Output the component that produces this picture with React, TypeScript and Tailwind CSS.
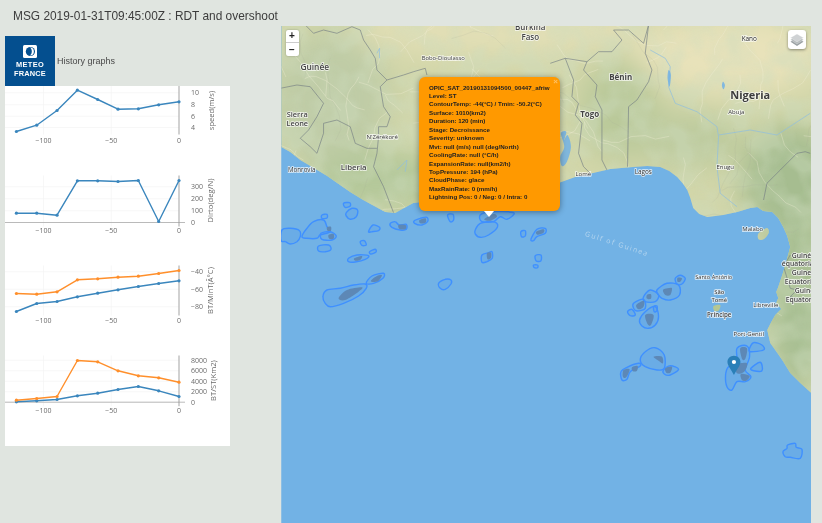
import React from "react";

type Pt = [number, number];
const z = (ox: number, oy: number, pts: number[]): Pt[] => {
  const r: Pt[] = [];
  for (let i = 0; i < pts.length; i += 2) r.push([pts[i] / 3 + ox, pts[i + 1] / 3 + oy]);
  return r;
};
const line = (p: Pt[]) => "M" + p.map((q) => q[0].toFixed(1) + " " + q[1].toFixed(1)).join("L");
const blob = (p: Pt[]) => {
  const n = p.length;
  const f = (v: number) => v.toFixed(1);
  let d = `M${f(p[0][0])} ${f(p[0][1])}`;
  for (let i = 0; i < n; i++) {
    const p0 = p[(i - 1 + n) % n];
    const p1 = p[i];
    const p2 = p[(i + 1) % n];
    const p3 = p[(i + 2) % n];
    const c1: Pt = [p1[0] + (p2[0] - p0[0]) / 6, p1[1] + (p2[1] - p0[1]) / 6];
    const c2: Pt = [p2[0] - (p3[0] - p1[0]) / 6, p2[1] - (p3[1] - p1[1]) / 6];
    d += `C${f(c1[0])} ${f(c1[1])} ${f(c2[0])} ${f(c2[1])} ${f(p2[0])} ${f(p2[1])}`;
  }
  return d + "Z";
};

const coast: Pt[] = [
  [281, 26], [811, 26], [811, 393], [800, 383], [790, 373], [782, 360], [775, 350], [770, 343], [767, 330], [771, 322], [775, 315], [781, 309], [776, 303], [778, 298], [776, 292], [778, 287], [783, 272], [787, 258], [790, 247], [787, 236], [783, 227], [778, 218], [772, 212], [763, 211], [757, 207], [750, 208], [737, 212], [723, 215], [707, 217], [699, 214], [693, 208], [690, 198], [687, 190], [683, 184], [677, 177], [669, 171], [660, 167], [647, 166], [633, 167], [610, 169], [593, 173], [575, 177], [550, 186], [480, 195], [413, 203], [402, 209], [395, 213], [385, 212], [374, 206], [363, 200], [350, 192], [337, 183], [327, 176], [317, 170], [300, 160], [290, 152], [281, 147],
];

const b3 = (a: number[]) => z(280, 20, a);
const b4 = (a: number[]) => z(550, 20, a);
const borders: Pt[][] = [
  b3([75, 15, 100, 40, 130, 30, 170, 40, 215, 20, 240, 30, 250, 60, 270, 90, 285, 115, 290, 150, 320, 180, 370, 165, 400, 155, 435, 145, 440, 165]),
  b3([320, 180, 300, 200, 310, 260, 330, 290, 320, 320, 295, 320, 295, 350, 290, 400, 280, 440, 310, 500, 340, 578]),
  b3([0, 205, 50, 195, 90, 200, 130, 250, 110, 290, 85, 330, 60, 355]),
  b3([60, 355, 90, 380, 110, 400, 130, 340, 130, 310, 170, 300, 210, 320, 225, 370, 260, 385, 290, 385]),
  b4([0, 130, 45, 115, 70, 180, 65, 230, 85, 250, 75, 285, 95, 310, 85, 400, 100, 440, 120, 460]),
  b4([100, 150, 140, 195, 135, 230, 155, 270, 155, 420, 170, 450]),
  b4([45, 115, 110, 125, 145, 95, 185, 95, 215, 60, 190, 30, 235, 30, 280, 70, 295, 15]),
  b4([100, 150, 110, 125]),
  b4([295, 15, 285, 100, 305, 150, 295, 185, 260, 240, 235, 260, 232, 440]),
  b4([780, 400, 765, 395, 740, 400, 690, 450, 650, 490, 640, 540]),
  z(590, 200, [600, 165, 580, 200, 600, 265, 620, 270, 600, 290, 640, 300, 662, 295]),
];
const rivers: Pt[][] = [
  b4([300, 90, 345, 115, 360, 140, 355, 200, 375, 250, 440, 275, 500, 320, 505, 350, 500, 440, 510, 520, 560, 560]),
  b4([505, 345, 600, 330, 680, 345, 780, 280]),
  b3([290, 100, 298, 85, 298, 115]),
  b3([350, 450, 380, 420, 375, 455]),
];
const lakes: Pt[][] = [
  b4([355, 150, 362, 165, 358, 200, 352, 175]),
  b4([518, 185, 524, 195, 520, 208, 515, 198]),
  b4([32, 340, 48, 335, 42, 360, 52, 345, 62, 380, 50, 425, 35, 438, 30, 410, 42, 380]),
];

const clouds5 = [
  [5, 120, 30, 115, 58, 122, 60, 140, 50, 155, 30, 162, 15, 155, 3, 152],
  [65, 140, 80, 115, 100, 95, 130, 90, 140, 110, 150, 125, 120, 135, 110, 145, 80, 145],
  [122, 130, 150, 125, 168, 138, 155, 150, 125, 148],
  [115, 168, 145, 165, 152, 178, 135, 185, 115, 183],
  [190, 40, 208, 38, 210, 48, 195, 52],
  [198, 68, 215, 55, 232, 60, 228, 80, 210, 88, 198, 78],
  [125, 75, 140, 73, 140, 84, 125, 85],
  [265, 125, 278, 105, 298, 112, 295, 122, 275, 125],
  [240, 155, 252, 152, 258, 165, 245, 166],
  [205, 205, 230, 195, 265, 197, 255, 208, 225, 216, 205, 215],
  [268, 185, 285, 178, 287, 186, 272, 192],
  [128, 320, 140, 300, 180, 295, 220, 285, 255, 282, 258, 295, 235, 318, 190, 340, 150, 350, 135, 340],
  [258, 280, 275, 258, 310, 250, 308, 265, 280, 280],
  [330, 100, 345, 95, 357, 105, 378, 103, 378, 118, 360, 120, 335, 112],
  [402, 92, 420, 85, 440, 82, 442, 95, 425, 105, 403, 100],
  [502, 75, 518, 73, 520, 90, 510, 95],
  [585, 120, 600, 100, 640, 95, 652, 110, 625, 135, 600, 142, 585, 132],
  [600, 75, 630, 65, 700, 68, 680, 88, 660, 80, 640, 95, 605, 95],
  [722, 125, 735, 122, 735, 138, 724, 140],
  [752, 148, 770, 118, 795, 115, 795, 130, 770, 140, 760, 152],
  [605, 195, 625, 188, 635, 185, 636, 205, 620, 215, 605, 217],
  [765, 197, 782, 195, 782, 212, 768, 213],
  [760, 225, 772, 225, 772, 233, 762, 233],
  [475, 280, 495, 268, 512, 270, 512, 282, 495, 298, 480, 295],
];
const dark5 = [
  [175, 325, 200, 300, 245, 292, 235, 305, 195, 330],
  [272, 272, 290, 258, 305, 256, 295, 272, 280, 276],
  [222, 205, 245, 198, 240, 210, 225, 212],
  [612, 88, 640, 72, 650, 80, 630, 92],
  [768, 125, 790, 118, 790, 128, 772, 134],
  [140, 112, 152, 110, 152, 122, 142, 122],
  [145, 135, 160, 132, 160, 146, 147, 146],
  [355, 105, 376, 105, 376, 117, 358, 117],
  [418, 90, 436, 85, 436, 98, 420, 100],
  [620, 190, 632, 188, 632, 204, 622, 208],
];
const clouds6 = [
  [255, 235, 270, 226, 285, 235, 275, 252, 260, 252],
  [200, 270, 230, 250, 265, 255, 268, 285, 240, 300, 215, 295, 205, 285],
  [160, 290, 180, 270, 205, 285, 195, 305, 165, 305],
  [130, 310, 160, 298, 165, 325, 140, 333, 130, 325],
  [112, 335, 125, 328, 135, 345, 120, 347],
  [148, 360, 165, 335, 195, 320, 205, 350, 195, 375, 175, 385, 155, 378],
  [190, 320, 200, 318, 200, 332, 192, 335],
  [150, 480, 165, 455, 195, 443, 222, 465, 222, 505, 200, 510, 165, 500],
  [92, 515, 110, 502, 145, 490, 150, 498, 120, 515, 110, 538, 95, 540],
  [220, 510, 240, 497, 265, 508, 240, 525, 222, 522],
  [406, 525, 415, 500, 440, 490, 440, 445, 470, 438, 478, 470, 465, 510, 482, 530, 465, 545, 440, 545, 425, 570, 410, 560],
  [478, 445, 490, 428, 515, 435, 520, 450, 480, 455],
  [482, 505, 510, 487, 515, 512, 490, 512],
  [578, 755, 590, 745, 592, 735, 615, 730, 618, 742, 635, 748, 630, 775, 600, 772, 585, 770],
];
const dark6 = [
  [262, 233, 275, 235, 270, 245, 262, 245],
  [218, 270, 232, 265, 245, 265, 240, 285, 225, 285],
  [170, 285, 182, 283, 182, 296, 170, 296],
  [138, 315, 160, 302, 160, 320, 145, 328],
  [165, 345, 190, 345, 182, 375, 172, 372],
  [190, 470, 215, 470, 218, 490, 205, 482],
  [225, 505, 245, 500, 240, 518, 228, 518],
  [100, 510, 118, 508, 108, 532, 98, 530],
  [125, 502, 142, 498, 140, 512, 128, 514],
  [450, 445, 470, 445, 466, 475, 456, 478],
  [440, 495, 470, 490, 462, 515, 440, 520],
  [452, 522, 478, 528, 468, 542, 455, 540],
];

const rng = (() => {
  let s = 12345;
  return () => {
    s = (s * 16807) % 2147483647;
    return s / 2147483647;
  };
})();
const roads: string[] = [];
for (let i = 0; i < 150; i++) {
  let x = 281 + rng() * 530;
  let y = 26 + rng() * 370;
  let a = rng() * 6.28;
  const pts: Pt[] = [[x, y]];
  const n = 3 + Math.floor(rng() * 6);
  for (let j = 0; j < n; j++) {
    a += (rng() - 0.5) * 1.2;
    const l = 5 + rng() * 10;
    x += Math.cos(a) * l;
    y += Math.sin(a) * l;
    pts.push([x, y]);
  }
  roads.push(line(pts));
}

type L = { t: string; x: number; y: number; s?: number; w?: number; a?: "start" | "middle"; c?: string };
const labels: L[] = [
  { t: "Guinée", x: 314.5, y: 70, s: 8.4, w: 600, c: "#444" },
  { t: "Sierra", x: 297, y: 117, s: 7.4, w: 600, c: "#444" },
  { t: "Leone", x: 297, y: 125.5, s: 7.4, w: 600, c: "#444" },
  { t: "N'Zérékoré", x: 382, y: 139, s: 6.1, c: "#333" },
  { t: "Liberia", x: 353.5, y: 169.5, s: 7.8, w: 600, c: "#444" },
  { t: "Monrovia", x: 301.5, y: 171.5, s: 6.2, c: "#333" },
  { t: "Bobo-Dioulasso", x: 443, y: 60, s: 5.9, c: "#333" },
  { t: "Burkina", x: 530, y: 30, s: 8, w: 600, c: "#444" },
  { t: "Faso", x: 530, y: 40, s: 8, w: 600, c: "#444" },
  { t: "Bénin", x: 620.5, y: 80, s: 8, w: 700, c: "#444" },
  { t: "Togo", x: 589.5, y: 117, s: 8, w: 700, c: "#444" },
  { t: "Lomé", x: 583, y: 176, s: 6, c: "#333" },
  { t: "Lagos", x: 643, y: 174, s: 6.4, c: "#333" },
  { t: "Nigeria", x: 750, y: 98.5, s: 11, w: 700, c: "#3c3c3c" },
  { t: "Abuja", x: 736, y: 114, s: 6, c: "#333" },
  { t: "Kano", x: 749, y: 40.5, s: 6.4, c: "#222" },
  { t: "Enugu", x: 725, y: 169, s: 6, c: "#333" },
  { t: "Malabo", x: 752.5, y: 230.5, s: 6, c: "#333" },
  { t: "Santo António", x: 713.5, y: 278.5, s: 5.6, c: "#333" },
  { t: "São", x: 719, y: 294, s: 5.8, w: 600, c: "#444" },
  { t: "Tomé", x: 719, y: 301.5, s: 5.8, w: 600, c: "#444" },
  { t: "Príncipe", x: 719, y: 317, s: 6.2, w: 600, c: "#444" },
  { t: "Libreville", x: 765.5, y: 307, s: 6, c: "#333" },
  { t: "Port-Gentil", x: 748.5, y: 336, s: 6, c: "#333" },
  { t: "Guinée", x: 791.5, y: 257.5, s: 6.8, w: 600, a: "start", c: "#444" },
  { t: "équatoriale", x: 781.5, y: 266, s: 6.8, w: 600, a: "start", c: "#444" },
  { t: "Guinea", x: 791.5, y: 274.5, s: 6.8, w: 600, a: "start", c: "#444" },
  { t: "Ecuatorial", x: 784.5, y: 283.5, s: 6.8, w: 600, a: "start", c: "#444" },
  { t: "Guinea", x: 794.5, y: 292.5, s: 6.8, w: 600, a: "start", c: "#444" },
  { t: "Equatorial", x: 785.5, y: 301.5, s: 6.8, w: 600, a: "start", c: "#444" },
];

function MapArt() {
  return (
    <svg viewBox="281 26 530 497" className="block h-full w-full">
      <defs>
        <clipPath id="land">
          <path d={line(coast) + "Z"} />
          <path d={blob(z(590, 200, [505, 100, 530, 85, 535, 100, 520, 118, 505, 118]))} />
        </clipPath>
        <filter id="soft" x="-20%" y="-20%" width="140%" height="140%">
          <feGaussianBlur stdDeviation="14" />
        </filter>
        <filter id="terrain" x="0" y="0" width="100%" height="100%">
          <feTurbulence type="fractalNoise" baseFrequency="0.04" numOctaves="2" seed="7" />
          <feColorMatrix type="matrix" values="0 0 0 0 0.62  0 0 0 0 0.72  0 0 0 0 0.52  3.2 0 0 0 -1.15" />
        </filter>
      </defs>
      <rect x="281" y="26" width="530" height="497" fill="#72b2e5" />
      <g clipPath="url(#land)">
        <rect x="281" y="26" width="530" height="400" fill="#d2d6a9" />
        <g filter="url(#soft)">
          <ellipse cx="500" cy="30" rx="150" ry="26" fill="#e2dfb6" />
          <ellipse cx="730" cy="55" rx="95" ry="40" fill="#e8e2ba" />
          <ellipse cx="330" cy="100" rx="60" ry="70" fill="#bfcca6" />
          <ellipse cx="620" cy="110" rx="40" ry="50" fill="#bac99a" />
          <ellipse cx="690" cy="140" rx="55" ry="28" fill="#bdcb9e" />
          <ellipse cx="790" cy="180" rx="50" ry="55" fill="#a6bd90" />
          <ellipse cx="800" cy="300" rx="35" ry="90" fill="#a8bf93" />
          <ellipse cx="380" cy="180" rx="70" ry="30" fill="#b4c89a" />
        </g>
        <rect x="281" y="26" width="530" height="400" filter="url(#terrain)" opacity="0.4" />
        {roads.map((d, i) => (
          <path key={i} d={d} fill="none" stroke={i % 4 === 0 ? "#a8b29a" : "#f3efd6"} strokeWidth={i % 4 === 0 ? 0.3 : 0.55} opacity={0.6} />
        ))}
        {rivers.map((p, i) => (
          <path key={i} d={line(p)} fill="none" stroke="#8fbfe0" strokeWidth="0.7" />
        ))}
        {lakes.map((p, i) => (
          <path key={i} d={blob(p)} fill="#72b2e5" opacity="0.85" />
        ))}
        {borders.map((p, i) => (
          <path key={i} d={line(p)} fill="none" stroke="#757f84" strokeWidth="0.65" strokeLinejoin="round" />
        ))}
      </g>
      <path d={blob(z(590, 200, [370, 318, 390, 315, 385, 332, 372, 332]))} fill="#b6c792" />

      <text x="616" y="246" fill="#b6d6ef" fontSize="7" fontFamily="'Open Sans', sans-serif" letterSpacing="1.4" textAnchor="middle" transform="rotate(18 616 246)">
        Gulf of Guinea
      </text>

      {[...clouds5.map((a) => z(280, 190, a)), ...clouds6.map((a) => z(590, 200, a))].map((p, i) => (
        <path key={i} d={blob(p)} fill="#3f8cf0" fillOpacity="0.14" stroke="#3f90ff" strokeWidth="1.4" strokeLinejoin="round" />
      ))}
      {[...dark5.map((a) => z(280, 190, a)), ...dark6.map((a) => z(590, 200, a))].map((p, i) => (
        <path key={i} d={blob(p)} fill="#5d88b6" />
      ))}

      {labels.map((l, i) => (
        <text
          key={i}
          x={l.x}
          y={l.y}
          textAnchor={l.a ?? "middle"}
          fontSize={l.s}
          fontWeight={l.w ?? 500}
          fill={l.c}
          stroke="#ffffff"
          strokeOpacity="0.8"
          strokeWidth="1.5"
          paintOrder="stroke"
          fontFamily="'Open Sans', sans-serif"
        >
          {l.t}
        </text>
      ))}

      <path d="M733.7 355.7c-3.7 0-6.5 2.8-6.5 6.3 0 3.6 4.6 9 6.5 13 1.9-4 6.5-9.4 6.5-13 0-3.5-2.8-6.3-6.5-6.3Z" fill="#2a7fb8" />
      <circle cx="733.7" cy="362" r="2.1" fill="#fff" />
    </svg>
  );
}

const tx = (t: number) => 179 + 1.355 * t;
const T = [-120, -105, -90, -75, -60, -45, -30, -15, 0];

function Series({ ys, color }: { ys: number[]; color: string }) {
  const pts = ys.map((y, i) => [tx(T[i]), y] as Pt);
  return (
    <g>
      <path d={line(pts)} fill="none" stroke={color} strokeWidth="1.4" strokeLinejoin="round" />
      {pts.map((p, i) => (
        <circle key={i} cx={p[0]} cy={p[1]} r="1.6" fill={color} />
      ))}
    </g>
  );
}

type Ch = {
  top: number;
  bottom: number;
  ticks: [string, number][];
  tickX: number;
  labelY: number;
  title: string;
  titleX: number;
  titleY: number;
  zero?: number;
  series: { ys: number[]; color: string }[];
};
const B = "#3a86bd";
const O = "#ff8f2b";
const charts: Ch[] = [
  {
    top: 85.5, bottom: 134, tickX: 191, labelY: 142.5, title: "speed(m/s)", titleX: 214, titleY: 110,
    ticks: [["10", 92.3], ["8", 104.3], ["6", 115.7], ["4", 127]],
    series: [{ ys: [131, 124.7, 110, 89.7, 99, 108.7, 108.3, 104.3, 101.3], color: B }],
  },
  {
    top: 175, bottom: 226, tickX: 191, labelY: 232.5, title: "Dirto(deg/N)", titleX: 213, titleY: 200, zero: 222,
    ticks: [["300", 186.3], ["200", 198.3], ["100", 210.3], ["0", 222]],
    series: [{ ys: [212.7, 212.7, 214.7, 180.3, 180.3, 181, 180, 221, 180], color: B }],
  },
  {
    top: 265, bottom: 315, tickX: 191, labelY: 322.5, title: "BT/MinT(Â°C)", titleX: 213, titleY: 290,
    ticks: [["−40", 271.3], ["−60", 288.7], ["−80", 306.3]],
    series: [
      { ys: [311, 303, 301, 296.3, 292.7, 289.3, 286, 283, 280.3], color: B },
      { ys: [293, 293.7, 291.3, 279.3, 278.3, 276.7, 275.7, 273, 270], color: O },
    ],
  },
  {
    top: 355, bottom: 405.7, tickX: 191, labelY: 412.5, title: "BT/ST(Km2)", titleX: 216, titleY: 380, zero: 401.7,
    ticks: [["8000", 359.7], ["6000", 370.3], ["4000", 380.7], ["2000", 391.3], ["0", 401.7]],
    series: [
      { ys: [401.3, 400.3, 399, 395.3, 392.7, 389, 386, 390.3, 396], color: B },
      { ys: [399.7, 398, 396, 360, 361.3, 370.3, 375.3, 377.3, 381.7], color: O },
    ],
  },
];

function Charts() {
  return (
    <svg viewBox="5 85.5 225 360" className="block h-full w-full" fontFamily="'Open Sans', sans-serif">
      {charts.map((c, i) => (
        <g key={i}>
          {c.ticks.map(([, y], j) => (
            <line key={j} x1="5" x2="179" y1={y} y2={y} stroke="#f3f3f3" strokeWidth="0.7" />
          ))}
          {[-100, -50].map((t) => (
            <line key={t} x1={tx(t)} x2={tx(t)} y1={c.top} y2={c.bottom} stroke="#f3f3f3" strokeWidth="0.7" />
          ))}
          {c.zero !== undefined && <line x1="5" x2="185" y1={c.zero} y2={c.zero} stroke="#aaa" strokeWidth="0.8" />}
          <line x1="179" x2="179" y1={c.top} y2={c.bottom} stroke="#999" strokeWidth="0.9" />
          {c.series.map((s, j) => (
            <Series key={j} ys={s.ys} color={s.color} />
          ))}
          {c.ticks.map(([t, y], j) => (
            <text key={j} x={c.tickX} y={y + 2.4} fontSize="7" fill="#6b6b6b">
              {t}
            </text>
          ))}
          {[["−100", -100], ["−50", -50], ["0", 0]].map(([t, v]) => (
            <text key={String(v)} x={tx(v as number)} y={c.labelY} fontSize="7" fill="#6b6b6b" textAnchor="middle">
              {t}
            </text>
          ))}
          <text
            x={c.titleX}
            y={c.titleY}
            fontSize="7.6"
            fill="#6b6b6b"
            textAnchor="middle"
            transform={`rotate(-90 ${c.titleX} ${c.titleY})`}
          >
            {c.title}
          </text>
        </g>
      ))}
    </svg>
  );
}

const popupLines = [
  "OPIC_SAT_20190131094500_00447_afriw",
  "Level: ST",
  "ContourTemp: -44(°C) / Tmin: -50.2(°C)",
  "Surface: 1010(km2)",
  "Duration: 120 (min)",
  "Stage: Decroissance",
  "Severity: unknown",
  "Mvt: null (m/s) null (deg/North)",
  "CoolingRate: null (°C/h)",
  "ExpansionRate: null(km2/h)",
  "TopPressure: 194 (hPa)",
  "CloudPhase: glace",
  "MaxRainRate: 0 (mm/h)",
  "Lightning Pos: 0 / Neg: 0 / Intra: 0",
];

export default function App() {
  return (
    <div className="flex h-[523px] w-[822px] flex-col overflow-hidden bg-[#e0e5e0] font-['Liberation_Sans',sans-serif] blur-[0.35px]">
      <div className="h-[26px] shrink-0 pl-[13px] pt-[8px] text-[11.9px] leading-[16px] text-[#3c3c3c]">
        MSG 2019-01-31T09:45:00Z : RDT and overshoot
      </div>
      <div className="flex min-h-0 flex-1">
        <div className="w-[280.5px] shrink-0 pl-[5px] pt-[9.5px]">
          <div className="flex items-center">
            <div className="flex h-[50px] w-[50px] shrink-0 flex-col items-center bg-[#044f8f] pt-[9px] text-white">
              <svg viewBox="0 0 14 13" className="h-[13px] w-[14px]">
                <rect width="14" height="13" rx="1.5" fill="#fff" />
                <circle cx="7.4" cy="6.5" r="4.6" fill="#044f8f" />
                <path d="M7 2.6a3.9 3.9 0 0 1 0 7.8c1.3-1 1.8-2.4 1.8-3.9S8.300 3.600 7 2.600Z" fill="#fff" />
              </svg>
              <div className="mt-[2.500px] text-[7.4px] font-bold leading-[9px] tracking-[0.35px]">METEO</div>
              <div className="text-[7.4px] font-bold leading-[9px] tracking-[0.2px]">FRANCE</div>
            </div>
            <span className="ml-[2px] text-[9px] leading-[14px] text-[#4a4a4a]">History graphs</span>
          </div>
          <div className="h-[360px] w-[225px] bg-white">
            <Charts />
          </div>
        </div>
        <div className="relative h-[497px] w-[530.5px] shrink-0 overflow-hidden">
          <MapArt />
          <div className="absolute left-[5px] top-[4px] flex h-[26px] w-[13px] flex-col rounded-[2px] bg-white text-[#222] shadow-[0_0_2px_rgba(0,0,0,0.3)]">
            <div className="flex h-[13px] items-center justify-center border-b border-[#ccc] text-[10px] font-bold leading-none">+</div>
            <div className="flex h-[13px] items-center justify-center text-[10px] font-bold leading-none">−</div>
          </div>
          <div className="absolute left-[507px] top-[4px] flex h-[19px] w-[18px] items-center justify-center rounded-[3px] bg-white shadow-[0_1px_3px_rgba(0,0,0,0.4)]">
            <svg viewBox="0 0 14 14" className="h-[14px] w-[14px]">
              <path d="M7 5 13.500 8.700 7 13 .5 8.700Z" fill="#9aa0a3" />
              <path d="M7 3 13.500 6.700 7 11 .5 6.700Z" fill="#b4b9bb" stroke="#fff" strokeWidth=".3" />
              <path d="M7 1 13.500 4.700 7 9 .5 4.700Z" fill="#cfd2d4" stroke="#fff" strokeWidth=".3" />
            </svg>
          </div>
          <div className="absolute left-[138.5px] top-[51px] h-[134px] w-[141px] rounded-[6px] bg-[#ff9900] pl-[10px] pt-[6.500px] text-[6.2px] font-bold leading-[8.46px] text-[#222] shadow-[0_1px_6px_rgba(0,0,0,0.4)]">
            <span className="absolute right-[2px] top-[1px] text-[8px] font-bold leading-[8px] text-[#ffc266]">×</span>
            {popupLines.map((t) => (
              <div key={t} className="whitespace-nowrap">
                {t}
              </div>
            ))}
            <div className="absolute left-[65px] top-full h-0 w-0 border-x-[5px] border-t-[6px] border-x-transparent border-t-white" />
          </div>
        </div>
      </div>
    </div>
  );
}
